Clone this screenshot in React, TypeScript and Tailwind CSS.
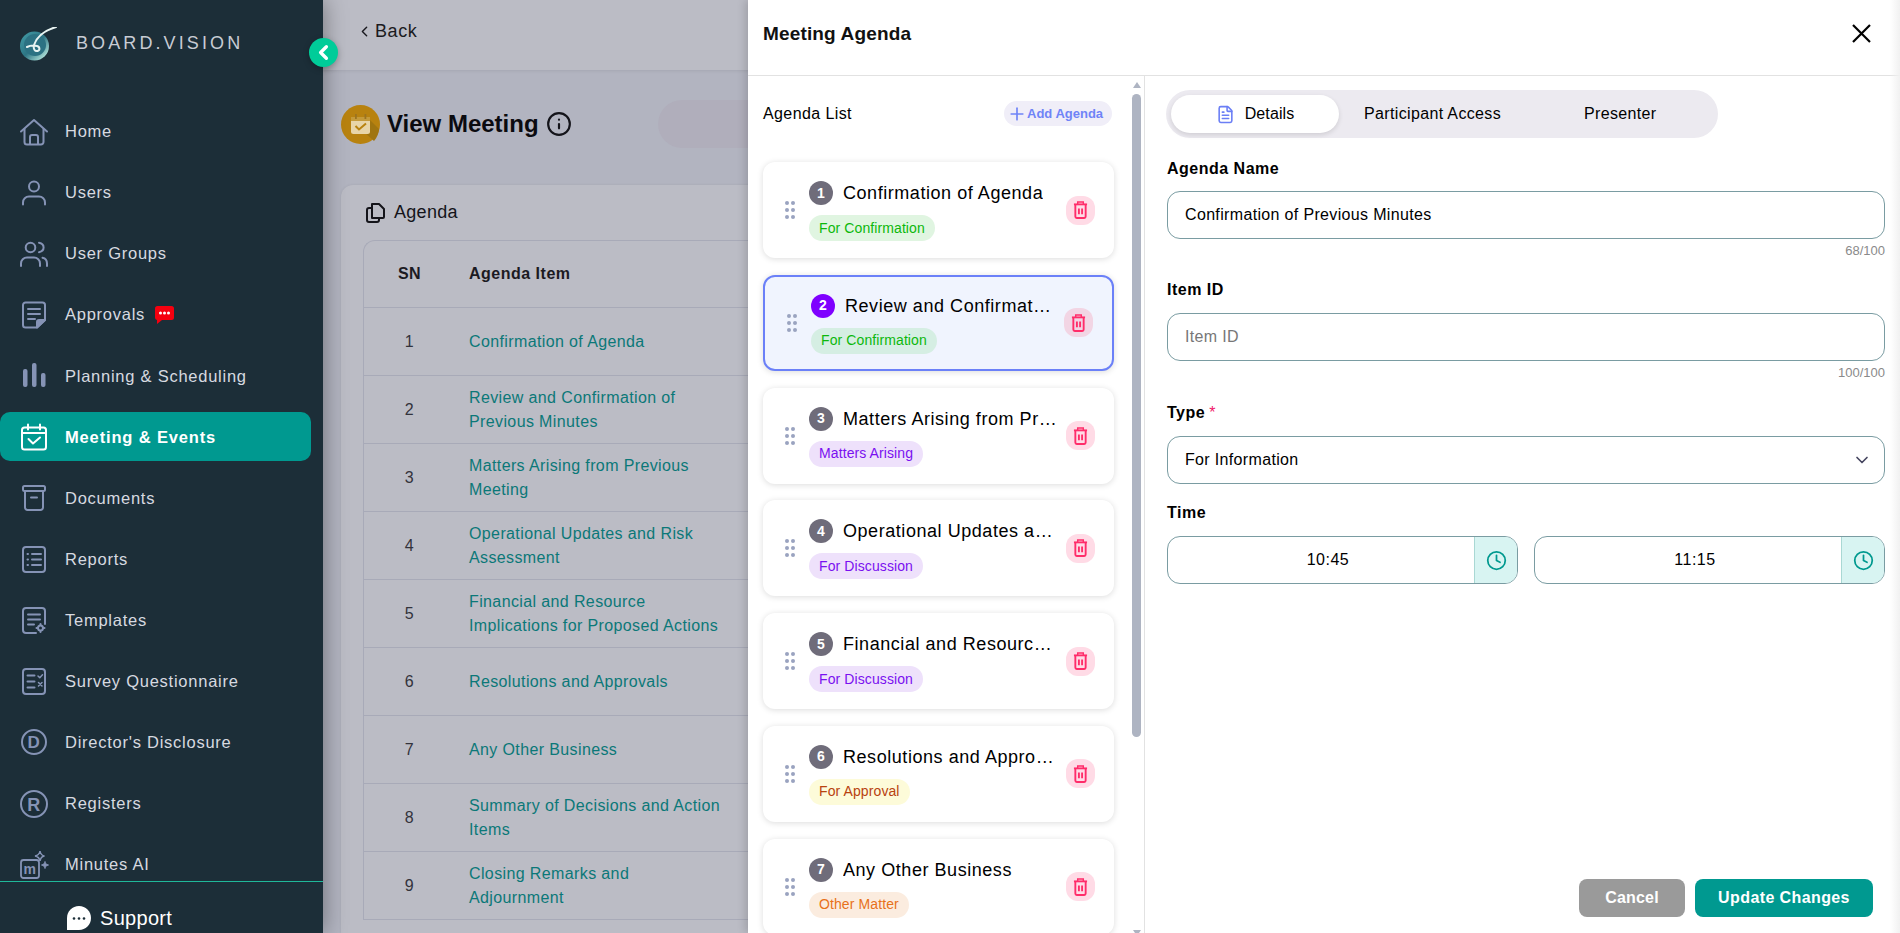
import React from "react";
import { ChevronLeft, Info, FileText, Clock, ChevronDown, Plus } from "lucide-react";

function Ico({ children, size = 28 }: { children: React.ReactNode; size?: number }) {
  return (
    <svg width={size} height={size} viewBox="0 0 28 28" fill="none" stroke="currentColor" strokeWidth="2" strokeLinecap="round" strokeLinejoin="round" className="shrink-0">
      {children}
    </svg>
  );
}

const icons: Record<string, React.ReactNode> = {
  home: (
    <Ico>
      <path d="M1 13.5 14 2l13 11.5" />
      <path d="M4.5 11v13a2.5 2.5 0 0 0 2.5 2.5h14a2.5 2.5 0 0 0 2.5-2.5V11" />
      <path d="M10 26v-7a2 2 0 0 1 2-2h4a2 2 0 0 1 2 2v7" />
    </Ico>
  ),
  user: (
    <Ico>
      <circle cx="14" cy="7.5" r="5" />
      <path d="M3 25.5v-2a6 6 0 0 1 6-6h10a6 6 0 0 1 6 6v2" />
    </Ico>
  ),
  users: (
    <Ico>
      <circle cx="10.5" cy="7.5" r="4.8" />
      <path d="M19 2.8c3 .6 4.6 2.4 4.6 4.7s-1.6 4-4.6 4.7" />
      <path d="M1 26v-2.5a6 6 0 0 1 6-6h7a6 6 0 0 1 6 6V26" />
      <path d="M22.5 17.8c2.6.6 4.5 2.8 4.5 5.7V26" />
    </Ico>
  ),
  approvals: (
    <Ico>
      <path d="M17 26.5H5.5A2.5 2.5 0 0 1 3 24V4a2.5 2.5 0 0 1 2.5-2.5h17A2.5 2.5 0 0 1 25 4v15z" />
      <path d="M8 8h12M8 13h12M8 18h7" />
      <path d="M25 19h-6a2 2 0 0 0-2 2v5.5z" fill="currentColor" />
    </Ico>
  ),
  chart: (
    <svg width="28" height="28" viewBox="0 0 28 28" className="shrink-0" fill="currentColor">
      <rect x="3" y="7" width="4.5" height="18" rx="2" />
      <rect x="12" y="1" width="4.5" height="24" rx="2" />
      <rect x="21" y="11" width="4.5" height="14" rx="2" />
    </svg>
  ),
  calendar: (
    <Ico>
      <rect x="2" y="4.5" width="24" height="22" rx="2.5" />
      <path d="M2 10h24M8 1.5v5M20 1.5v5" />
      <path d="m8.5 16 4.5 4.5 7-6" />
    </Ico>
  ),
  archive: (
    <Ico>
      <rect x="3" y="2" width="22" height="5" rx="1.5" />
      <path d="M5 7v16.5A2.5 2.5 0 0 0 7.5 26h13a2.5 2.5 0 0 0 2.5-2.5V7" />
      <path d="M11 13.5h6" />
    </Ico>
  ),
  report: (
    <Ico>
      <rect x="3" y="2" width="22" height="25" rx="3" />
      <path d="M12 9h9M12 14.5h9M12 20h9M7.5 9h.5M7.5 14.5h.5M7.5 20h.5" />
    </Ico>
  ),
  template: (
    <Ico>
      <path d="M16 27H6a3 3 0 0 1-3-3V5a3 3 0 0 1 3-3h16a3 3 0 0 1 3 3v13" />
      <path d="M8 8.5h12M8 13.5h12M8 18.5h6" />
      <circle cx="20.5" cy="22" r="2.5" />
      <path d="M20.5 18v1M20.5 25v1M16.5 22h1M23.5 22h1" />
    </Ico>
  ),
  survey: (
    <Ico>
      <rect x="3" y="2" width="22" height="25" rx="3" />
      <path d="M7.5 8.5h7M7.5 14.5h7M7.5 20.5h7" />
      <path d="m18 9 1.8 1.8 2.7-3M18.5 15.5l3.5 3.5M22 15.5 18.5 19" strokeWidth="1.5" />
    </Ico>
  ),
  d: (
    <svg width="28" height="28" viewBox="0 0 28 28" className="shrink-0">
      <circle cx="14" cy="14" r="12" fill="none" stroke="currentColor" strokeWidth="2" />
      <text x="14" y="20" textAnchor="middle" fontSize="17" fontWeight="700" fill="currentColor" fontFamily="Liberation Sans, sans-serif">D</text>
    </svg>
  ),
  r: (
    <svg width="28" height="28" viewBox="0 0 28 28" className="shrink-0">
      <circle cx="14" cy="14" r="13" fill="none" stroke="currentColor" strokeWidth="2" />
      <text x="14" y="20.5" textAnchor="middle" fontSize="18" fontWeight="700" fill="currentColor" fontFamily="Liberation Sans, sans-serif">R</text>
    </svg>
  ),
  minutes: (
    <svg width="30" height="30" viewBox="0 0 30 30" className="shrink-0 -mr-[2px]" fill="none" stroke="currentColor" strokeWidth="1.8">
      <rect x="1" y="10" width="18" height="18" rx="2.5" />
      <text x="10" y="24" textAnchor="middle" fontSize="14" fontWeight="700" fill="currentColor" stroke="none" fontFamily="Liberation Sans, sans-serif">m</text>
      <path d="M20 1c.5 3 1.5 4.5 4.5 5-3 .5-4 2-4.5 5-.5-3-2-4.5-5-5 3-.5 4.5-2 5-5z" strokeWidth="1.5" />
      <path d="M25 11.5c.3 2 1 3 3.5 3.5-2.5.5-3.2 1.5-3.5 3.5-.3-2-1.2-3-3.5-3.5 2.3-.5 3.2-1.5 3.5-3.5z" fill="currentColor" strokeWidth="1" />
    </svg>
  ),
};

const nav: { label: string; icon: string; active?: boolean; chat?: boolean }[] = [
  { label: "Home", icon: "home" },
  { label: "Users", icon: "user" },
  { label: "User Groups", icon: "users" },
  { label: "Approvals", icon: "approvals", chat: true },
  { label: "Planning & Scheduling", icon: "chart" },
  { label: "Meeting & Events", icon: "calendar", active: true },
  { label: "Documents", icon: "archive" },
  { label: "Reports", icon: "report" },
  { label: "Templates", icon: "template" },
  { label: "Survey Questionnaire", icon: "survey" },
  { label: "Director's Disclosure", icon: "d" },
  { label: "Registers", icon: "r" },
  { label: "Minutes AI", icon: "minutes" },
];

function Logo() {
  return (
    <svg width="38" height="34" viewBox="0 0 38 34" className="shrink-0">
      <defs>
        <linearGradient id="lg" x1="0.1" y1="0.1" x2="0.9" y2="0.9">
          <stop offset="0" stopColor="#3f97a2" />
          <stop offset="0.5" stopColor="#2d7584" />
          <stop offset="1" stopColor="#b6e8de" />
        </linearGradient>
      </defs>
      <circle cx="15.5" cy="19" r="14.5" fill="url(#lg)" />
      <circle cx="16" cy="18" r="11" fill="#2c7283" />
      <path d="M37 0C27 3 18 9 15 18c-1 4 1 6.5 3.5 6 2.5-.5 2.8-4-.5-5-2-.5-7-.5-10 1" fill="none" stroke="#e8f4f2" strokeWidth="2" strokeLinecap="round" />
    </svg>
  );
}

function Sidebar() {
  return (
    <aside className="relative z-20 w-[323px] shrink-0 h-full bg-[#1c2e38] flex flex-col shadow-[0_0_22px_rgba(0,0,0,0.4)]">
      <div className="h-[107px] shrink-0 flex items-start pl-[19px] pt-[27px]">
        <Logo />
        <span className="ml-[19px] mt-[4px] text-[18px] leading-[24px] tracking-[3.1px] text-[#c8ccd4]">BOARD.VISION</span>
      </div>
      <button className="absolute left-[309px] top-[38px] w-[29px] h-[29px] rounded-full bg-[#00cc99] flex items-center justify-center shadow-[0_2px_6px_rgba(0,0,0,0.25)]">
        <ChevronLeft size={23} strokeWidth={3.5} color="#ffffff" className="-ml-[1px]" />
      </button>
      <nav className="flex-1 min-h-0 overflow-hidden flex flex-col gap-[12.1px]">
        {nav.map((n) => (
          <div
            key={n.label}
            className={
              n.active
                ? "h-[49px] shrink-0 w-[311px] rounded-[10px] bg-[#009990] flex items-center pl-[20px] gap-[17px] text-white font-bold text-[16.5px] tracking-[0.85px]"
                : "h-[49px] shrink-0 w-[311px] flex items-center pl-[20px] gap-[17px] text-[#d7dae0] text-[16.5px] tracking-[0.75px]"
            }
          >
            <span className={n.active ? "text-white" : "text-[#8593b5]"}>{icons[n.icon]}</span>
            <span>{n.label}</span>
            {n.chat && (
              <svg width="19" height="18" viewBox="0 0 19 18" className="shrink-0 -ml-[7px]">
                <path d="M2.5 0h14A2.5 2.5 0 0 1 19 2.5v9a2.5 2.5 0 0 1-2.5 2.5H7l-5 4v-4A2.5 2.5 0 0 1 0 11.5v-9A2.5 2.5 0 0 1 2.5 0z" fill="#f5000f" />
                <circle cx="5.5" cy="7" r="1.5" fill="#fff" />
                <circle cx="9.5" cy="7" r="1.5" fill="#fff" />
                <circle cx="13.5" cy="7" r="1.5" fill="#fff" />
              </svg>
            )}
          </div>
        ))}
      </nav>
      <div className="h-[52px] shrink-0 border-t border-[#1fb89a] flex items-center pt-[20px] pl-[67px] gap-[9px] text-white text-[20px] tracking-[0.3px]">
        <svg width="24" height="24" viewBox="0 0 24 24" className="shrink-0">
          <path d="M12 0c6.600 0 12 5.400 12 12s-5.400 12-12 12H0V12C0 5.400 5.400 0 12 0z" fill="#fff" />
          <circle cx="7" cy="12.5" r="1.3" fill="#1c2e38" />
          <circle cx="12" cy="12.5" r="1.3" fill="#1c2e38" />
          <circle cx="17" cy="12.5" r="1.3" fill="#1c2e38" />
        </svg>
        <span>Support</span>
      </div>
    </aside>
  );
}

const rows = [
  "Confirmation of Agenda",
  "Review and Confirmation of Previous Minutes",
  "Matters Arising from Previous Meeting",
  "Operational Updates and Risk Assessment",
  "Financial and Resource Implications for Proposed Actions",
  "Resolutions and Approvals",
  "Any Other Business",
  "Summary of Decisions and Action Items",
  "Closing Remarks and Adjournment",
];

function Background() {
  return (
    <main className="flex-1 min-w-0 h-full bg-[#b2b4c0] flex flex-col overflow-hidden">
      <div className="h-[70px] shrink-0 bg-[#bbbcc5] flex items-center pl-[33px] pb-[8px] text-[18px] tracking-[0.6px] text-[#1a1a20] shadow-[0_1px_3px_rgba(0,0,0,0.08)]">
        <ChevronLeft size={17} strokeWidth={2} />
        <span className="ml-[2px]">Back</span>
      </div>
      <div className="ml-[18px] mt-[30px] h-[48px] shrink-0 flex items-center">
        <svg width="39" height="39" viewBox="0 0 39 39" className="shrink-0">
          <circle cx="19.5" cy="19.5" r="19.5" fill="#b8820f" />
          <path d="M11 16 L33 36 A19.5 19.5 0 0 0 38 24 L27 13z" fill="#a07510" />
          <rect x="10" y="12" width="19" height="17" rx="2.5" fill="#e8d5a8" />
          <rect x="10" y="12" width="19" height="4" fill="#c49a3a" />
          <rect x="14" y="9" width="1.8" height="5" fill="#9c7420" />
          <rect x="23.5" y="9" width="1.8" height="5" fill="#9c7420" />
          <path d="m14.5 21 3.5 3.5 7-6" fill="none" stroke="#b8820f" strokeWidth="2" />
        </svg>
        <span className="ml-[7px] text-[24px] font-bold text-[#0b0b10] leading-[30px] -mt-[1px]">View Meeting</span>
        <Info size={26} strokeWidth={2} className="ml-[7px] text-[#14141a]" />
        <div className="ml-[86px] h-[48px] w-[300px] rounded-full bg-[#b0aebb]" />
      </div>
      <section className="ml-[18px] mt-[37px] flex-1 min-h-0 bg-[#bbbcc5] rounded-tl-[12px] pl-[22px] shadow-[0_0_3px_rgba(0,0,0,0.08)]">
        <div className="h-[55px] flex items-center gap-[9px] text-[18px] tracking-[0.3px] text-[#14141a] pl-[3px]">
          <svg width="19" height="20" viewBox="0 0 19 20" fill="none" stroke="currentColor" strokeWidth="2" strokeLinejoin="round" className="shrink-0">
            <path d="M6 1h7l5 5v8a1 1 0 0 1-1 1H6z" />
            <path d="M6 5H3a2 2 0 0 0-2 2v10a2 2 0 0 0 2 2h8a2 2 0 0 0 2-2v-2" />
          </svg>
          <span>Agenda</span>
        </div>
        <div className="w-[900px] border-l border-t border-[#a8aab8] rounded-tl-[12px]">
          <div className="h-[67px] flex items-center border-b border-[#a8aab8] text-[16px] font-bold text-[#1c1a22] tracking-[0.5px]">
            <div className="w-[91px] text-center">SN</div>
            <div className="pl-[14px]">Agenda Item</div>
          </div>
          {rows.map((r, i) => (
            <div key={r} className="h-[68px] flex items-center border-b border-[#a8aab8] text-[16px] leading-[24px] tracking-[0.38px]">
              <div className="w-[91px] text-center text-[#33333c]">{i + 1}</div>
              <div className="ml-[14px] w-[256px] text-[#0b7878]">{r}</div>
            </div>
          ))}
        </div>
      </section>
    </main>
  );
}

function Dots() {
  return (
    <div className="grid grid-cols-2 gap-x-[2px] gap-y-[3px] w-[10px] shrink-0">
      {[0, 1, 2, 3, 4, 5].map((i) => (
        <span key={i} className="w-[4px] h-[4px] rounded-full bg-[#9aa3c0]" />
      ))}
    </div>
  );
}

function Trash({ selected }: { selected?: boolean }) {
  return (
    <div className={(selected ? "bg-[#f2d5e4]" : "bg-[#ffdbe6]") + " w-[29px] h-[29px] rounded-[12px] shrink-0 flex items-center justify-center"}>
      <svg width="15" height="18" viewBox="0 0 16 19" fill="none" stroke="#ff2d6a" className="shrink-0">
        <path d="M1 3.5h14" strokeWidth="2" />
        <path d="M5 3V1h6v2" strokeWidth="1.5" />
        <path d="M2.5 4v12.5a1.5 1.5 0 0 0 1.5 1.5h8a1.5 1.5 0 0 0 1.5-1.5V4" strokeWidth="2" />
        <path d="M6.3 8v6M9.7 8v6" strokeWidth="2" />
      </svg>
    </div>
  );
}

const chips: Record<string, string> = {
  conf: "bg-[#e0f5e1] text-[#0cb80c]",
  confSel: "bg-[#d5eee3] text-[#0cb80c]",
  purple: "bg-[#eee1fb] text-[#7a10f0]",
  appr: "bg-[#fdfbd9] text-[#b8420f]",
  other: "bg-[#fbecdf] text-[#e8711a]",
};

const agenda = [
  { t: "Confirmation of Agenda", c: "For Confirmation", k: "conf" },
  { t: "Review and Confirmation of Previous Minutes", c: "For Confirmation", k: "confSel", sel: true },
  { t: "Matters Arising from Previous Meeting", c: "Matters Arising", k: "purple" },
  { t: "Operational Updates and Risk Assessment", c: "For Discussion", k: "purple" },
  { t: "Financial and Resource Implications for Proposed Actions", c: "For Discussion", k: "purple" },
  { t: "Resolutions and Approvals", c: "For Approval", k: "appr" },
  { t: "Any Other Business", c: "Other Matter", k: "other" },
];

function AgendaCard({ i, a }: { i: number; a: (typeof agenda)[number] }) {
  return (
    <div
      className={
        (a.sel ? "border-2 border-[#6b80f8] bg-[#f0f4fe] " : "bg-white ") +
        "h-[96px] shrink-0 rounded-[12px] flex items-center pl-[22px] pr-[19px] shadow-[0_1px_6px_rgba(0,0,0,0.14)]"
      }
    >
      <Dots />
      <div className="ml-[14px] flex-1 min-w-0 flex flex-col gap-[10px] pt-[2px]">
        <div className={(a.sel ? "pr-[2px] " : "") + "flex items-center gap-[10px] min-w-0"}>
          <span className={(a.sel ? "bg-[#7f00ff]" : "bg-[#6f6c7a]") + " w-[24px] h-[24px] rounded-full shrink-0 flex items-center justify-center text-white text-[14px] font-bold"}>{i + 1}</span>
          <span className="truncate text-[18px] leading-[24px] tracking-[0.55px] text-black">{a.t}</span>
        </div>
        <span className={chips[a.k] + " self-start h-[26px] rounded-full px-[10px] flex items-center text-[14px] tracking-[0.1px]"}>{a.c}</span>
      </div>
      <div className="ml-[8px]">
        <Trash selected={a.sel} />
      </div>
    </div>
  );
}

function AgendaList() {
  return (
    <div className="w-[397px] shrink-0 h-full border-r border-[#e2e2e2] flex overflow-hidden">
      <div className="w-[366px] shrink-0 pl-[15px] pt-[25px] flex flex-col">
        <div className="h-[25px] flex items-center justify-between shrink-0 pr-[2px]">
          <span className="text-[16px] tracking-[0.4px] text-black">Agenda List</span>
          <span className="h-[25px] w-[108px] rounded-full bg-[#f0eef8] flex items-center pl-[3px] text-[13px] font-bold text-[#6f84f7]">
            <Plus size={20} strokeWidth={2} />
            Add Agenda
          </span>
        </div>
        <div className="mt-[36px] flex flex-col gap-[16.8px]">
          {agenda.map((a, i) => (
            <AgendaCard key={a.t} i={i} a={a} />
          ))}
        </div>
      </div>
      <div className="ml-[18px] w-[9px] shrink-0 flex flex-col items-center relative">
        <span className="mt-[6px] w-0 h-0 border-l-[4.5px] border-r-[4.5px] border-b-[6px] border-l-transparent border-r-transparent border-b-[#aeb4c2]" />
        <span className="mt-[6px] w-[9px] h-[643px] rounded-full bg-[#aeb4c2]" />
        <span className="absolute top-[854px] w-0 h-0 border-l-[4.5px] border-r-[4.5px] border-t-[6px] border-l-transparent border-r-transparent border-t-[#aeb4c2]" />
      </div>
    </div>
  );
}

function Label({ children, className = "" }: { children: React.ReactNode; className?: string }) {
  return <div className={"h-[24px] flex items-center text-[16px] font-bold text-black tracking-[0.5px] " + className}>{children}</div>;
}

const box = "h-[48px] rounded-[13px] border border-[#7a9ca2] bg-white tracking-[0.34px]";

function TimeBox({ value }: { value: string }) {
  return (
    <div className={box + " flex-1 flex overflow-hidden"}>
      <div className="flex-1 flex items-center justify-center pl-[14px] text-[16px] tracking-[0.5px] text-black">{value}</div>
      <div className="w-[43px] bg-[#d8f4f2] border-l border-[#a9d8d4] flex items-center justify-center">
        <Clock size={21} strokeWidth={2} color="#00998f" />
      </div>
    </div>
  );
}

function Details() {
  return (
    <div className="flex-1 min-w-0 h-full pl-[22px] pr-[15px] pt-[14px] flex flex-col">
      <div className="w-[552px] -ml-[1px] h-[48px] rounded-full bg-[#eceaf0] flex items-center pl-[5px] text-[16px] tracking-[0.35px] text-black shrink-0">
        <div className="w-[168px] h-[38px] rounded-full bg-white shadow-[0_2px_5px_rgba(0,0,0,0.12)] flex items-center justify-center gap-[10px]">
          <FileText size={19} color="#6b7ff5" strokeWidth={2} />
          <span className="tracking-[0.1px]">Details</span>
        </div>
        <span className="ml-[25px]">Participant Access</span>
        <span className="ml-[83px]">Presenter</span>
      </div>
      <Label className="mt-[19px]">Agenda Name</Label>
      <input readOnly value="Confirmation of Previous Minutes" className={box + " mt-[10px] shrink-0 w-full px-[17px] text-[16px] text-black outline-none"} />
      <div className="mt-[4px] h-[16px] text-right text-[13px] leading-[16px] text-[#8a8a8a]">68/100</div>
      <Label className="mt-[19px]">Item ID</Label>
      <input readOnly placeholder="Item ID" className={box + " mt-[11px] shrink-0 w-full px-[17px] text-[16px] text-black placeholder:text-[#777777] outline-none"} />
      <div className="mt-[4px] h-[16px] text-right text-[13px] leading-[16px] text-[#8a8a8a]">100/100</div>
      <Label className="mt-[20px]">
        Type <span className="ml-[4px] font-normal text-[#f0186a]">*</span>
      </Label>
      <div className={box + " mt-[11px] shrink-0 flex items-center justify-between pl-[17px] pr-[12px] text-[16px] text-black"}>
        <span>For Information</span>
        <ChevronDown size={20} color="#45455f" strokeWidth={2} />
      </div>
      <Label className="mt-[17px]">Time</Label>
      <div className="mt-[11px] flex gap-[16px] shrink-0">
        <TimeBox value="10:45" />
        <TimeBox value="11:15" />
      </div>
      <div className="mt-auto pb-[16px] pr-[12px] flex justify-end gap-[10px] text-[16px] font-bold text-white">
        <button className="w-[106px] h-[38px] rounded-[8px] bg-[#9a9a9a] tracking-[0.2px]">Cancel</button>
        <button className="w-[178px] h-[38px] rounded-[8px] bg-[#009990] tracking-[0.4px]">Update Changes</button>
      </div>
    </div>
  );
}

function Drawer() {
  return (
    <div className="absolute right-0 top-0 z-10 w-[1152px] h-full bg-white flex flex-col shadow-[-3px_0_8px_rgba(0,0,0,0.15)]">
      <header className="h-[76px] shrink-0 border-b border-[#e2e2e2] flex items-center justify-between pl-[15px] pr-[29px] pb-[6px]">
        <span className="text-[19px] tracking-[0.15px] font-bold text-[#111111]">Meeting Agenda</span>
        <svg width="19" height="19" viewBox="0 0 19 19" stroke="#000000" strokeWidth="2.2" className="shrink-0 -mt-[2px]">
          <path d="M1 1l17 17M18 1 1 18" />
        </svg>
      </header>
      <div className="flex-1 min-h-0 flex">
        <AgendaList />
        <Details />
      </div>
      <div className="absolute right-0 top-0 bottom-0 w-[10px] bg-gradient-to-r from-transparent to-[#f1f1f1] pointer-events-none" />
    </div>
  );
}

export default function App() {
  return (
    <div className="relative w-[1900px] h-[933px] flex overflow-hidden font-['Liberation_Sans',Arial,sans-serif]">
      <Sidebar />
      <Background />
      <Drawer />
    </div>
  );
}
